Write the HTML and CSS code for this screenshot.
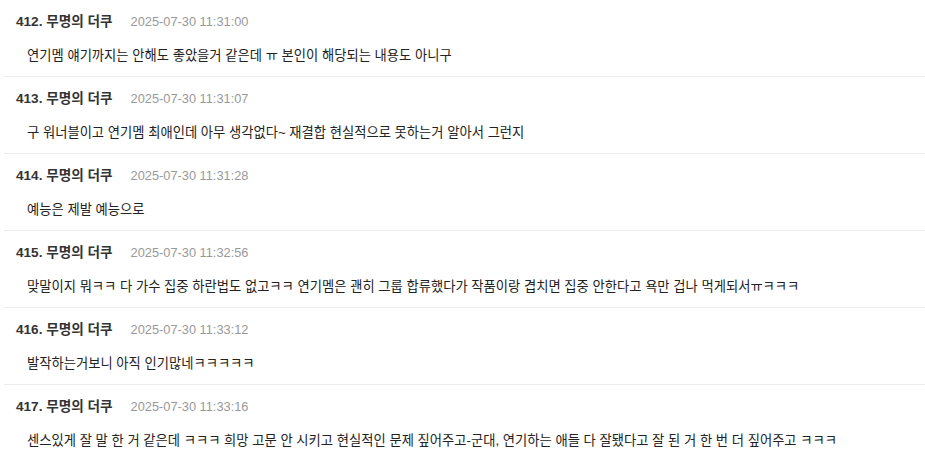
FILE: index.html
```html
<!DOCTYPE html>
<html lang="ko">
<head>
<meta charset="utf-8">
<link rel="stylesheet" href="styles.css">
</head>
<body>
<div class="list">
  <div class="item">
    <div class="head"><span class="name">412. 무명의 더쿠</span><span class="date">2025-07-30 11:31:00</span></div>
    <div class="body">연기멤 얘기까지는 안해도 좋았을거 같은데 ㅠ 본인이 해당되는 내용도 아니구</div>
  </div>
  <div class="item">
    <div class="head"><span class="name">413. 무명의 더쿠</span><span class="date">2025-07-30 11:31:07</span></div>
    <div class="body">구 워너블이고 연기멤 최애인데 아무 생각없다~ 재결합 현실적으로 못하는거 알아서 그런지</div>
  </div>
  <div class="item">
    <div class="head"><span class="name">414. 무명의 더쿠</span><span class="date">2025-07-30 11:31:28</span></div>
    <div class="body">예능은 제발 예능으로</div>
  </div>
  <div class="item">
    <div class="head"><span class="name">415. 무명의 더쿠</span><span class="date">2025-07-30 11:32:56</span></div>
    <div class="body">맞말이지 뭐ㅋㅋ 다 가수 집중 하란법도 없고ㅋㅋ 연기멤은 괜히 그룹 합류했다가 작품이랑 겹치면 집중 안한다고 욕만 겁나 먹게되서ㅠㅋㅋㅋ</div>
  </div>
  <div class="item">
    <div class="head"><span class="name">416. 무명의 더쿠</span><span class="date">2025-07-30 11:33:12</span></div>
    <div class="body">발작하는거보니 아직 인기많네ㅋㅋㅋㅋㅋ</div>
  </div>
  <div class="item">
    <div class="head"><span class="name">417. 무명의 더쿠</span><span class="date">2025-07-30 11:33:16</span></div>
    <div class="body">센스있게 잘 말 한 거 같은데 ㅋㅋㅋ 희망 고문 안 시키고 현실적인 문제 짚어주고-군대, 연기하는 애들 다 잘됐다고 잘 된 거 한 번 더 짚어주고 ㅋㅋㅋ</div>
  </div>
</div>
</body>
</html>
```

FILE: styles.css
```css
html, body {
  margin: 0;
  padding: 0;
  background: #fff;
}
body {
  font-family: "Liberation Sans", "Noto Sans CJK KR", sans-serif;
  color: #222;
}
.list {
  padding-left: 4px;
}
.item {
  padding: 13px 0 10px 12px;
  border-bottom: 1px solid #eeeeee;
}
.head {
  display: flex;
  align-items: baseline;
  gap: 18px;
  height: 18px;
  line-height: 18px;
}
.name {
  font-size: 13.6px;
  font-weight: bold;
  color: #333;
}
.date {
  font-size: 12.8px;
  color: #999;
}
.body {
  margin-top: 15px;
  padding-left: 11px;
  font-size: 13.3px;
  line-height: 20px;
  color: #222;
  white-space: nowrap;
}
```
